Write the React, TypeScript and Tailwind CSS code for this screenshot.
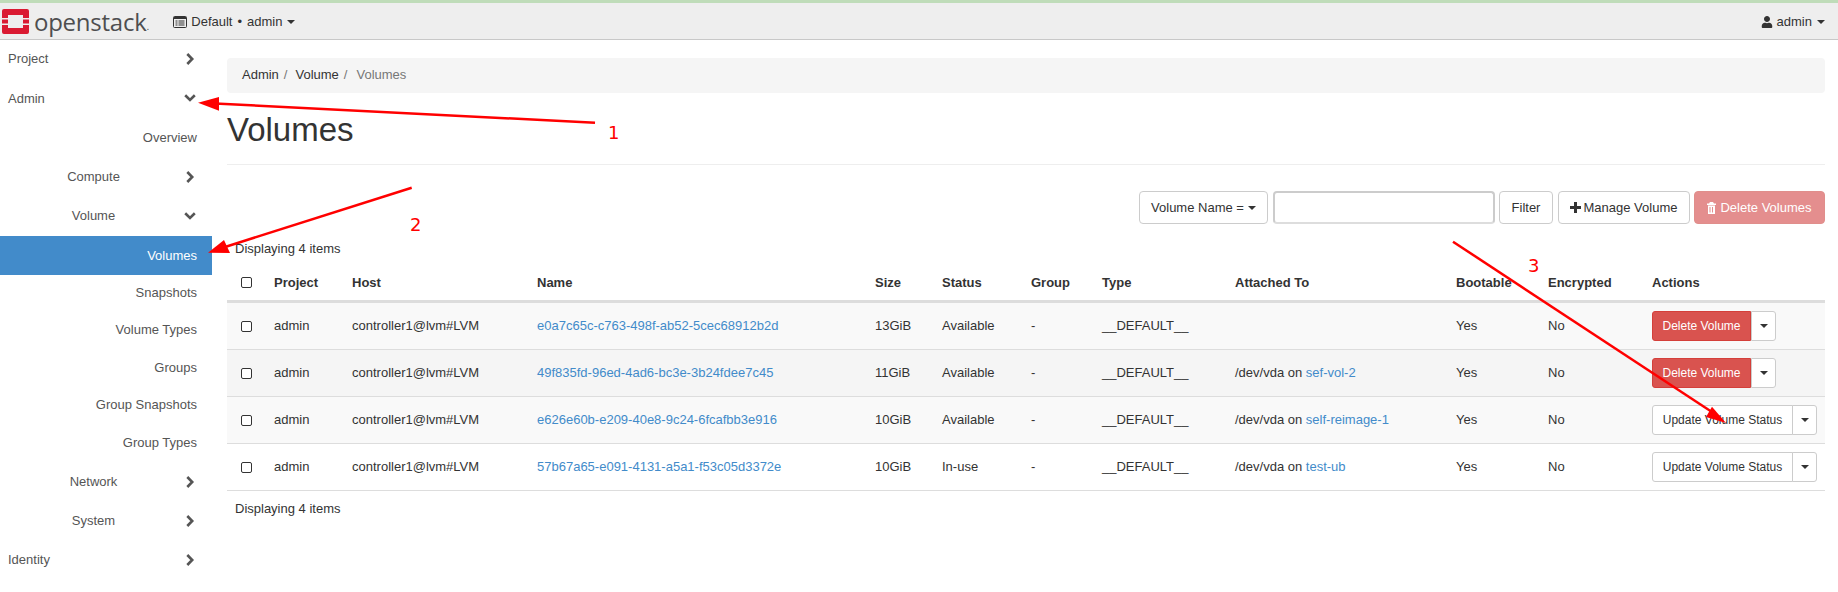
import React from "react";
import { FaUser } from "react-icons/fa";

const Caret = ({ className = "border-t-[#333]" }: { className?: string }) => (
  <span className={"inline-block w-0 h-0 border-x-[4px] border-x-transparent border-t-[4px] " + className} />
);

const Check = () => <span className="block w-[11px] h-[11px] rounded-[2px] border border-[#333] bg-white" />;

const Chevron = ({ open }: { open?: boolean }) =>
  open ? (
    <svg width="12" height="8" viewBox="0 0 12 8" className="shrink-0">
      <path d="M1.2 1.300 L6 6 L10.800 1.300" fill="none" stroke="#555" strokeWidth="2.6" />
    </svg>
  ) : (
    <svg width="12" height="12" viewBox="0 0 12 12" className="shrink-0">
      <path d="M3.300 1 L8.200 6 L3.300 11" fill="none" stroke="#555" strokeWidth="2.6" />
    </svg>
  );

const Top = ({ label, open }: { label: string; open?: boolean }) => (
  <div className="h-[39.5px] pl-2 pr-[16px] flex items-center justify-between text-[#555]">
    <span>{label}</span>
    <Chevron open={open} />
  </div>
);

const Mid = ({ label, open, h = "h-[39px]" }: { label: string; open?: boolean; h?: string }) => (
  <div className={h + " pr-[16px] flex items-center text-[#555]"}>
    <span className="w-[184px] pl-[3px] text-center">{label}</span>
    <Chevron open={open} />
  </div>
);

const Sub = ({ label, active, h = "h-[37.5px]" }: { label: string; active?: boolean; h?: string }) => (
  <div className={(active ? "bg-[#428bca] text-white h-[39px] " : "text-[#555] " + h + " ") + "pr-[15px] flex items-center justify-end"}>
    {label}
  </div>
);

const rows = [
  { id: "e0a7c65c-c763-498f-ab52-5cec68912b2d", size: "13GiB", status: "Available", vda: "", del: true, bg: "bg-[#f9f9f9]" },
  { id: "49f835fd-96ed-4ad6-bc3e-3b24fdee7c45", size: "11GiB", status: "Available", vda: "sef-vol-2", del: true, bg: "bg-[#f5f5f5]" },
  { id: "e626e60b-e209-40e8-9c24-6fcafbb3e916", size: "10GiB", status: "Available", vda: "self-reimage-1", del: false, bg: "bg-[#f9f9f9]" },
  { id: "57b67a65-e091-4131-a5a1-f53c05d3372e", size: "10GiB", status: "In-use", vda: "test-ub", del: false, bg: "bg-white" },
];

const cols = "grid grid-cols-[47px_78px_185px_338px_67px_89px_71px_133px_221px_92px_104px_173px] items-center";

const Row = ({ r }: { r: (typeof rows)[number] }) => (
  <div className={cols + " h-[47px] border-b border-[#ddd] " + r.bg}>
    <span className="pl-[14px]"><Check /></span>
    <span>admin</span>
    <span>controller1@lvm#LVM</span>
    <a className="text-[#428bca]">{r.id}</a>
    <span>{r.size}</span>
    <span>{r.status}</span>
    <span>-</span>
    <span>__DEFAULT__</span>
    <span>
      {r.vda && (
        <>
          /dev/vda on <a className="text-[#428bca]">{r.vda}</a>
        </>
      )}
    </span>
    <span>Yes</span>
    <span>No</span>
    <div className="flex h-[30px] text-[12px]">
      {r.del ? (
        <span className="w-[99px] flex items-center justify-center rounded-l-[3px] border border-[#d43f3a] bg-[#d9534f] text-white">Delete Volume</span>
      ) : (
        <span className="w-[141px] flex items-center justify-center rounded-l-[3px] border border-[#ccc] bg-white">Update Volume Status</span>
      )}
      <span className={(r.del ? "" : "-ml-px ") + "w-[25px] flex items-center justify-center rounded-r-[3px] border border-[#ccc] bg-white"}>
        <Caret />
      </span>
    </div>
  </div>
);

export default function App() {
  return (
    <div className="relative w-[1838px] h-[592px] overflow-hidden bg-white text-[13px] text-[#333] font-['Liberation_Sans',Arial,sans-serif]">
      <div className="h-[3px] bg-[#bfdcb9]" />
      <header className="h-[37px] pt-[1px] bg-[#eeeeee] border-b border-[#c8c8c8] flex items-center justify-between">
        <div className="flex items-center">
          <svg width="27" height="25" viewBox="0 0 27 25" className="ml-[2px]">
            <path fill="#da1a32" d="M2 0h23a2 2 0 0 1 2 2v7h-6V6H6v3H0V2a2 2 0 0 1 2-2zM0 16h6v3h15v-3h6v7a2 2 0 0 1-2 2H2a2 2 0 0 1-2-2z" />
            <rect x="0" y="10.500" width="6" height="4" fill="#da1a32" />
            <rect x="21" y="10.500" width="6" height="4" fill="#da1a32" />
          </svg>
          <span className="ml-[5px] text-[24px] leading-none tracking-[-0.25px] font-medium text-[#4e4e50] font-['Open_Sans',sans-serif]">openstack</span>
          <span className="text-[10px] self-end text-[#4e4e50]">.</span>
          <span className="ml-[24px] flex items-center text-[#333]">
            <svg width="14" height="12" viewBox="0 0 14 12" className="mr-[4px]">
              <rect x="0.500" y="0.500" width="13" height="11" rx="1" fill="none" stroke="#333" />
              <rect x="1" y="1" width="12" height="2" fill="#333" />
              <path d="M2.500 5h2M2.500 7h2M2.500 9h2M5.500 5h6M5.500 7h6M5.500 9h6" stroke="#333" />
            </svg>
            Default
            <span className="mx-[5px]">•</span>
            admin
            <span className="ml-[5px] flex"><Caret /></span>
          </span>
        </div>
        <div className="flex items-center pr-[13px]">
          <FaUser className="text-[12px] mr-[4px]" />
          admin
          <span className="ml-[5px] flex"><Caret /></span>
        </div>
      </header>
      <div className="flex">
        <aside className="w-[212px] shrink-0 -mt-px">
          <Top label="Project" />
          <Top label="Admin" open />
          <Sub label="Overview" h="h-[39px]" />
          <Mid label="Compute" />
          <Mid label="Volume" open h="h-[40px] pb-[1px]" />
          <Sub label="Volumes" active />
          <Sub label="Snapshots" h="h-[36px]" />
          <Sub label="Volume Types" />
          <Sub label="Groups" />
          <Sub label="Group Snapshots" />
          <Sub label="Group Types" />
          <Mid label="Network" h="h-[40px] pt-[1px]" />
          <Mid label="System" />
          <Top label="Identity" />
        </aside>
        <main className="w-[1598px] ml-[15px] pt-[18px]">
          <div className="h-[35px] pb-[2px] bg-[#f5f5f5] rounded-[4px] pl-[15px] flex items-center">
            <span>Admin</span>
            <span className="text-[#777] ml-[5px] mr-[8px]">/</span>
            <span>Volume</span>
            <span className="text-[#777] ml-[5px] mr-[9px]">/</span>
            <span className="text-[#777]">Volumes</span>
          </div>
          <h1 className="mt-[19px] text-[33px] leading-[36px] font-normal">Volumes</h1>
          <div className="mt-[16px] border-t border-[#eee]" />
          <div className="mt-[26px] flex justify-end h-[33px] gap-[4.5px]">
            <span className="w-[129px] flex items-center justify-center gap-[4px] rounded-[4px] border border-[#ccc]">
              Volume Name = <Caret />
            </span>
            <span className="w-[222px] rounded-[4px] border-2 border-[#ccc] border-b-[#ddd]" />
            <span className="w-[54px] flex items-center justify-center rounded-[4px] border border-[#ccc]">Filter</span>
            <span className="w-[132px] flex items-center justify-center gap-[3px] rounded-[4px] border border-[#ccc]">
              <svg width="11" height="11" viewBox="0 0 11 11"><path d="M5.500 0v11M0 5.500h11" stroke="#333" strokeWidth="3" /></svg> Manage Volume
            </span>
            <span className="w-[131px] flex items-center justify-center gap-[4px] rounded-[4px] border border-[#e08e8b] bg-[#e48e8e] text-white">
              <svg width="9" height="12" viewBox="0 0 9 12"><path fill="#fff" d="M3 0h3l1 1.500h2V3H0V1.500h2zM1 3.500h7V12H1zM2.500 5v5.500h1V5zm2.500 0v5.500h1V5z" fillRule="evenodd" /></svg>
              Delete Volumes
            </span>
          </div>
          <div className="mt-[17px] h-[15px] leading-[15px] pl-[8px]">Displaying 4 items</div>
          <div className={cols + " h-[41px] pt-[3px] border-b-[3px] border-[#ddd] mt-[6px] font-bold"}>
            <span className="pl-[14px]"><Check /></span>
            <span>Project</span>
            <span>Host</span>
            <span>Name</span>
            <span>Size</span>
            <span>Status</span>
            <span>Group</span>
            <span>Type</span>
            <span>Attached To</span>
            <span>Bootable</span>
            <span>Encrypted</span>
            <span>Actions</span>
          </div>
          {rows.map((r) => <Row key={r.id} r={r} />)}
          <div className="mt-[8px] pl-[8px]">Displaying 4 items</div>
        </main>
      </div>
      <svg className="absolute inset-0 pointer-events-none" width="1838" height="592" viewBox="0 0 1838 592">
        <g stroke="#f00" strokeWidth="2.5" fill="#f00">
          <line x1="595" y1="122.700" x2="215" y2="103.500" />
          <polygon stroke="none" points="198,102.700 219,97 219,110.700" />
          <line x1="411.700" y1="187.700" x2="225" y2="247" />
          <polygon stroke="none" points="208,252.700 224,240 230,253" />
          <line x1="1453" y1="241.700" x2="1715" y2="414" />
          <polygon stroke="none" points="1726,423 1706,417 1712,406.700" />
        </g>
        <g fill="#f00" fontSize="18" fontFamily="'DejaVu Sans', sans-serif">
          <text x="608" y="139">1</text>
          <text x="410" y="231">2</text>
          <text x="1528" y="272">3</text>
        </g>
      </svg>
    </div>
  );
}
